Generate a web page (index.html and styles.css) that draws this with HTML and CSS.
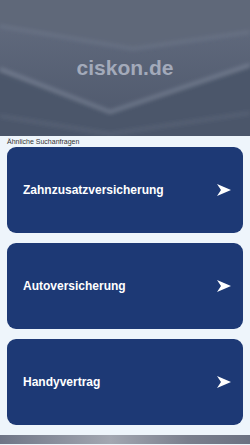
FILE: index.html
```html
<!DOCTYPE html>
<html lang="de">
<head>
    <meta charset="UTF-8">
    <meta name="viewport" content="width=device-width, initial-scale=1.0">
    <title>ciskon.de</title>
    <link rel="stylesheet" href="styles.css">
</head>
<body>
    <header class="hero">
        <svg class="hero-bg" viewBox="0 0 250 136" preserveAspectRatio="none" aria-hidden="true">
            <defs>
                <linearGradient id="shade" x1="0" y1="0" x2="0" y2="1">
                    <stop offset="0" stop-color="#646d80"/>
                    <stop offset="1" stop-color="#4d576b"/>
                </linearGradient>
                <filter id="soft" x="-10%" y="-10%" width="120%" height="120%">
                    <feGaussianBlur stdDeviation="2"/>
                </filter>
            </defs>
            <rect width="250" height="136" fill="url(#shade)"/>
            <g filter="url(#soft)">
                <polygon points="-10,-10 260,-10 260,30 133,48 -10,24" fill="#5e6779"/>
                <polyline points="0,26 133,49 250,32" fill="none" stroke="#7c8598" stroke-width="2" opacity="0.6"/>
                <polygon points="-10,68 110,112 260,63 260,146 -10,146" fill="#4c566a"/>
                <polyline points="0,69 110,112 250,65" fill="none" stroke="#8c95a8" stroke-width="2.5" opacity="0.7"/>
                <polyline points="0,116 110,134 250,113" fill="none" stroke="#717a8d" stroke-width="2" opacity="0.5"/>
            </g>
        </svg>
        <h1 class="site-name">ciskon.de</h1>
    </header>

    <main class="related">
        <p class="related-label">Ähnliche Suchanfragen</p>
        <div class="cards">
            <a class="card" href="#">
                <span>Zahnzusatzversicherung</span>
                <svg class="arrow" viewBox="0 0 14 12"><polygon points="0,0 14,6 0,12 4,6" fill="#fff"/></svg>
            </a>
            <a class="card" href="#">
                <span>Autoversicherung</span>
                <svg class="arrow" viewBox="0 0 14 12"><polygon points="0,0 14,6 0,12 4,6" fill="#fff"/></svg>
            </a>
            <a class="card" href="#">
                <span>Handyvertrag</span>
                <svg class="arrow" viewBox="0 0 14 12"><polygon points="0,0 14,6 0,12 4,6" fill="#fff"/></svg>
            </a>
        </div>
    </main>

    <footer class="bottom-bar"></footer>
</body>
</html>
```

FILE: styles.css
```css
body {
    margin: 0;
    font-family: "Liberation Sans", Arial, sans-serif;
    background: #eef5fb;
    color: #333;
}
.hero {
    position: relative;
    height: 136px;
    display: flex;
    align-items: center;
    justify-content: center;
    overflow: hidden;
}
.hero-bg {
    position: absolute;
    inset: 0;
    width: 100%;
    height: 100%;
}
.site-name {
    position: relative;
    margin: 0;
    font-size: 21px;
    font-weight: bold;
    color: #a3aaba;
}
.related {
    padding: 0 7px;
}
.related-label {
    margin: 0;
    font-size: 7px;
    line-height: 11px;
    color: #333;
}
.cards {
    display: flex;
    flex-direction: column;
    gap: 10px;
}
.card {
    height: 86px;
    display: flex;
    align-items: center;
    justify-content: space-between;
    padding: 0 12px 0 16px;
    background: #1d3975;
    border-radius: 9px;
    color: #fff;
    font-size: 12px;
    font-weight: bold;
    text-decoration: none;
}
.arrow {
    width: 14px;
    height: 12px;
}
.bottom-bar {
    margin-top: 10px;
    height: 9px;
    background: linear-gradient(to right, #6f7586, #a3a7b1 44%, #7a7f8d 75%, #6c7282);
}
```
